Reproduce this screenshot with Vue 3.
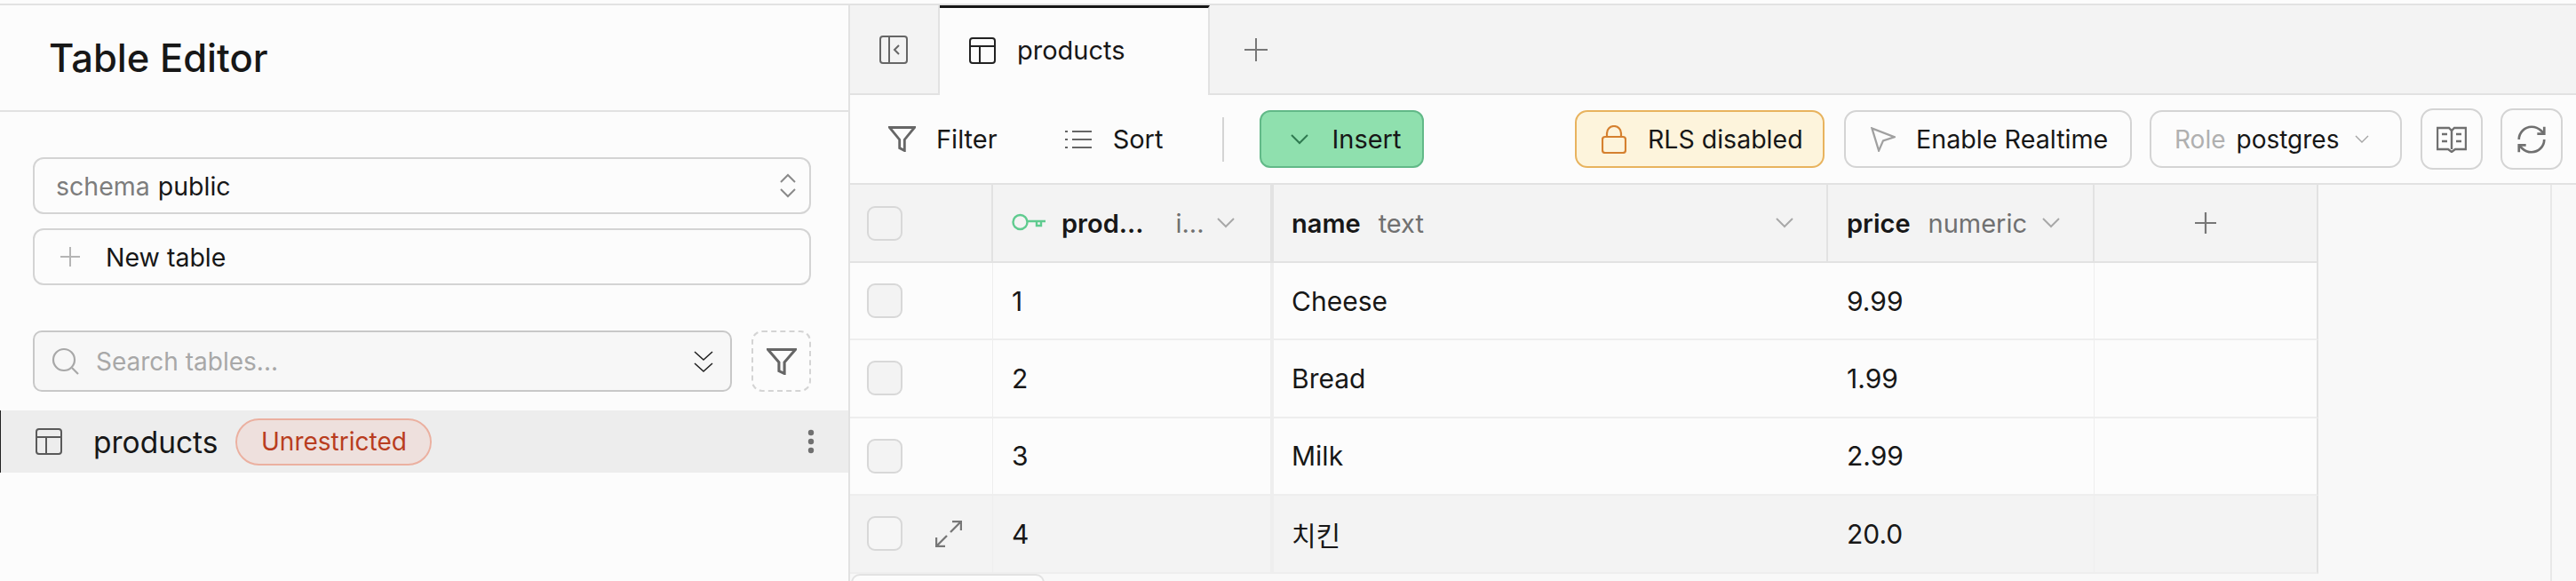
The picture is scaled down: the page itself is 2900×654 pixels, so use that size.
<template>
  <div class="page">
    <div class="top-line"></div>
    <div class="body">
      <aside class="sidebar">
        <div class="side-head"><h1>Table Editor</h1></div>
        <div class="side-form">
          <div class="field schema">
            <span class="muted">schema</span><span class="val">public</span>
            <svg class="updown" width="20" height="30" viewBox="0 0 20 30" fill="none" stroke="#8a8a8a" stroke-width="2"><path d="M2 11 10 3l8 8M2 19l8 8 8-8" /></svg>
          </div>
          <div class="field newtable">
            <svg width="24" height="24" viewBox="0 0 24 24" fill="none" stroke="#b5b5b5" stroke-width="2"><path d="M12 1v22M1 12h22" /></svg>
            <span>New table</span>
          </div>
          <div class="search-row">
            <div class="search">
              <svg width="32" height="32" viewBox="0 0 32 32" fill="none" stroke="#a8a8a8" stroke-width="2.2"><circle cx="14" cy="14" r="12" /><path d="m23 23 7 7" /></svg>
              <span class="placeholder">Search tables...</span>
              <svg class="dbl" width="24" height="26" viewBox="0 0 24 26" fill="none" stroke="#222" stroke-width="1.6"><path d="m2 2 10 9 10-9M2 15l10 9 10-9" /></svg>
            </div>
            <div class="dash-btn">
              <svg width="34" height="30" viewBox="1 2 22 20" preserveAspectRatio="none" fill="none" stroke="#666" stroke-width="2"><polygon points="22 3 2 3 10 12.46 10 19 14 21 14 12.46 22 3" /></svg>
            </div>
          </div>
        </div>
        <div class="table-row">
          <svg class="tbl" width="30" height="30" viewBox="0 0 30 30" fill="none" stroke="#5a5a5a" stroke-width="2"><rect x="1" y="1" width="28" height="28" rx="3" /><path d="M1 10h28M12 10v19" /></svg>
          <span class="row-name">products</span>
          <span class="badge">Unrestricted</span>
          <svg class="dots" width="8" height="28" viewBox="0 0 8 28" fill="#707070"><circle cx="4" cy="4" r="3.2" /><circle cx="4" cy="14" r="3.2" /><circle cx="4" cy="24" r="3.2" /></svg>
        </div>
      </aside>

      <main class="main">
        <div class="tabs">
          <div class="tab-toggle">
            <svg width="32" height="32" viewBox="0 0 32 32" fill="none" stroke="#666" stroke-width="2"><rect x="1" y="1" width="30" height="30" rx="3" /><path d="M11 1v30M22 11l-5 5 5 5" /></svg>
          </div>
          <div class="tab-active">
            <svg width="30" height="30" viewBox="0 0 30 30" fill="none" stroke="#222" stroke-width="2"><rect x="1" y="1" width="28" height="28" rx="3" /><path d="M1 10h28M12 10v19" /></svg>
            <span>products</span>
          </div>
          <div class="tab-add">
            <svg width="26" height="26" viewBox="0 0 26 26" fill="none" stroke="#777" stroke-width="2"><path d="M13 0v26M0 13h26" /></svg>
          </div>
        </div>

        <div class="toolbar">
          <div class="tool-left">
            <div class="tool filter">
              <svg width="31" height="29" viewBox="1 2 22 20" preserveAspectRatio="none" fill="none" stroke="#666" stroke-width="2"><polygon points="22 3 2 3 10 12.46 10 19 14 21 14 12.46 22 3" /></svg>
              <span>Filter</span>
            </div>
            <div class="tool sort">
              <svg width="30" height="22" viewBox="0 0 30 22" fill="none" stroke="#666" stroke-width="2.2"><path d="M8 2h22M8 11h22M8 20h22" /><path d="M0 2h3M0 11h3M0 20h3" /></svg>
              <span>Sort</span>
            </div>
            <div class="tool-sep"></div>
            <div class="insert">
              <svg width="20" height="12" viewBox="0 0 20 12" fill="none" stroke="#2f7a50" stroke-width="2"><path d="m1 1 9 9 9-9" /></svg>
              <span>Insert</span>
            </div>
          </div>
          <div class="tool-right">
            <div class="pill rls">
              <svg width="28" height="32" viewBox="0 0 28 32" fill="none" stroke="#d5802f" stroke-width="2.2"><rect x="1" y="13" width="26" height="18" rx="3" /><path d="M6 13V9a8 8 0 0 1 16 0v4" /></svg>
              <span>RLS disabled</span>
            </div>
            <div class="pill realtime">
              <svg width="28" height="28" viewBox="2 2 20 20" preserveAspectRatio="none" fill="none" stroke="#a0a0a0" stroke-width="1.6"><path d="m3 3 5.5 18 3.5-8 9-3z" /></svg>
              <span>Enable Realtime</span>
            </div>
            <div class="pill role">
              <span class="role-k">Role</span><span class="role-v">postgres</span>
              <svg width="16" height="10" viewBox="0 0 16 10" fill="none" stroke="#a5a5a5" stroke-width="1.4"><path d="m1 1 7 7 7-7" /></svg>
            </div>
            <div class="square first">
              <svg width="34" height="30" viewBox="0 0 34 30" fill="none" stroke="#707070" stroke-width="2.4"><path d="M1 2h13l3 3 3-3h13v24H21l-4 3-4-3H1z" /><path d="M17 5v21M6 9h6M6 17h6M22 9h6M22 17h6" /></svg>
            </div>
            <div class="square">
              <svg width="38" height="38" viewBox="0 0 24 24" fill="none" stroke="#707070" stroke-width="1.7"><path d="M3 12a9 9 0 0 1 9-9 9.75 9.75 0 0 1 6.74 2.74L21 8" /><path d="M21 3v5h-5" /><path d="M21 12a9 9 0 0 1-9 9 9.75 9.75 0 0 1-6.74-2.74L3 16" /><path d="M8 16H3v5" /></svg>
            </div>
          </div>
        </div>

        <div class="grid-area">
          <div class="grid-wrap">
            <div class="grid">
              <div class="cell head c-check"><span class="check"></span></div>
              <div class="cell head c-id">
                <svg class="key" width="38" height="20" viewBox="0 0 38 20" fill="none" stroke="#5fcb8f" stroke-width="2.4"><circle cx="9.5" cy="10" r="8" /><path d="M17.5 9H38M28 9v5h5V9" /></svg>
                <b class="col-id">prod...</b><span class="type col-i">i...</span>
                <svg class="chev" width="20" height="12" viewBox="0 0 20 12" fill="none" stroke="#a8a8a8" stroke-width="2"><path d="m1 1 9 9 9-9" /></svg>
              </div>
              <div class="cell head c-name">
                <b>name</b><span class="type">text</span>
                <svg class="chev" width="20" height="12" viewBox="0 0 20 12" fill="none" stroke="#a8a8a8" stroke-width="2"><path d="m1 1 9 9 9-9" /></svg>
              </div>
              <div class="cell head c-price">
                <b>price</b><span class="type">numeric</span>
                <svg class="chev" width="20" height="12" viewBox="0 0 20 12" fill="none" stroke="#a8a8a8" stroke-width="2"><path d="m1 1 9 9 9-9" /></svg>
              </div>
              <div class="cell head c-add">
                <svg width="24" height="24" viewBox="0 0 24 24" fill="none" stroke="#777" stroke-width="2.2"><path d="M12 0v24M0 12h24" /></svg>
              </div>

              <template v-for="(row, i) in rows" :key="row.id">
                <div class="cell c-check" :class="{ hover: i === 3 }">
                  <span class="check"></span>
                  <svg v-if="i === 3" class="expand" width="30" height="30" viewBox="0 0 30 30" fill="none" stroke="#777" stroke-width="2.4"><path d="M17 13 29 1M19 1h10v10M13 17 1 29M1 19v10h10" /></svg>
                </div>
                <div class="cell c-id" :class="{ hover: i === 3 }">{{ row.id }}</div>
                <div class="cell c-name" :class="{ hover: i === 3 }">{{ row.name }}</div>
                <div class="cell c-price" :class="{ hover: i === 3 }">{{ row.price }}</div>
                <div class="cell c-add" :class="{ hover: i === 3 }"></div>
              </template>
            </div>
            <div class="foot-tab"></div>
          </div>
          <div class="scroll-track"></div>
        </div>
      </main>
    </div>
  </div>
</template>

<script setup>
const rows = [
  { id: 1, name: 'Cheese', price: '9.99' },
  { id: 2, name: 'Bread', price: '1.99' },
  { id: 3, name: 'Milk', price: '2.99' },
  { id: 4, name: '치킨', price: '20.0' },
]
</script>

<style>
html, body {
  margin: 0;
  background: #fcfcfc;
}
</style>

<style scoped>
.page {
  width: 2900px;
  height: 654px;
  overflow: hidden;
  background: #fcfcfc;
  color: #171717;
  font-family: Inter, "Noto Sans CJK KR", sans-serif;
  font-size: 29px;
  display: flex;
  flex-direction: column;
}

.top-line {
  height: 4px;
  flex: none;
  border-bottom: 2px solid #e2e2e2;
}

.body {
  flex: 1;
  display: flex;
  min-height: 0;
}

.sidebar {
  width: 955px;
  flex: none;
  border-right: 2px solid #e2e2e2;
}

.side-head {
  height: 118px;
  display: flex;
  align-items: center;
  padding-left: 55px;
  border-bottom: 2px solid #e2e2e2;
}

h1 {
  margin: 0;
  font-size: 43.5px;
  font-weight: 500;
}

.side-form {
  padding: 51px 42px 0 37px;
  display: flex;
  flex-direction: column;
  gap: 16px;
  font-size: 28.5px;
}

.field {
  box-sizing: border-box;
  height: 64px;
  border: 2px solid #d4d4d4;
  border-radius: 12px;
  display: flex;
  align-items: center;
  padding: 0 14px 0 24px;
}

.muted {
  color: #7d7d7d;
  margin-right: 9px;
}

.updown {
  margin-left: auto;
}

.newtable svg {
  margin-left: 4px;
  margin-right: 28px;
}

.search-row {
  display: flex;
  gap: 22px;
  margin-top: 35px;
}

.search {
  box-sizing: border-box;
  width: 787px;
  height: 69px;
  background: #f7f7f7;
  border: 2px solid #c8c8c8;
  border-radius: 10px;
  display: flex;
  align-items: center;
  padding: 0 18px 0 19px;
  font-size: 28px;
}

.placeholder {
  color: #a8a8a8;
  margin-left: 18px;
}

.dbl {
  margin-left: auto;
}

.dash-btn {
  box-sizing: border-box;
  width: 67px;
  height: 69px;
  border: 2px dashed #d4d4d4;
  border-radius: 12px;
  display: flex;
  align-items: center;
  justify-content: center;
}

.table-row {
  height: 70px;
  margin-top: 21px;
  background: #ededed;
  border-left: 1px solid #222;
  display: flex;
  align-items: center;
  padding-left: 39px;
  padding-right: 38px;
}

.row-name {
  margin-left: 35px;
  font-size: 33.5px;
  padding-top: 2px;
}

.badge {
  box-sizing: border-box;
  height: 53px;
  width: 221px;
  margin-left: 20px;
  background: #eee0dd;
  border: 2px solid #ebb0a0;
  border-radius: 27px;
  color: #b93d20;
  display: flex;
  align-items: center;
  justify-content: center;
  font-size: 28px;
}

.dots {
  margin-left: auto;
}

.main {
  flex: 1;
  min-width: 0;
  display: flex;
  flex-direction: column;
}

.tabs {
  height: 101px;
  flex: none;
  box-sizing: border-box;
  background: #f3f3f3;
  border-bottom: 2px solid #e2e2e2;
  display: flex;
}

.tab-toggle {
  width: 101px;
  padding-left: 33px;
  box-sizing: border-box;
  display: flex;
  align-items: center;
  border-right: 2px solid #e2e2e2;
}

.tab-active {
  box-sizing: border-box;
  width: 304px;
  height: 101px;
  background: #fcfcfc;
  border-top: 3px solid #171717;
  border-right: 2px solid #e2e2e2;
  display: flex;
  align-items: center;
  gap: 24px;
  padding-left: 33px;
  padding-bottom: 3px;
}

.tab-add {
  width: 104px;
  display: flex;
  align-items: center;
  justify-content: center;
}

.toolbar {
  height: 101px;
  flex: none;
  box-sizing: border-box;
  border-bottom: 2px solid #e2e2e2;
  display: flex;
  align-items: center;
  justify-content: space-between;
  padding: 0 15px 0 43px;
}

.tool-left,
.tool-right {
  display: flex;
  align-items: center;
}

.tool {
  display: flex;
  align-items: center;
}

.filter {
  gap: 23px;
}

.sort {
  margin-left: 76px;
  gap: 24px;
}

.tool-sep {
  width: 2px;
  height: 50px;
  background: #d4d4d4;
  margin: 0 40px 0 67px;
}

.insert {
  box-sizing: border-box;
  width: 185px;
  height: 65px;
  background: #8fe0ae;
  border: 2px solid #62b988;
  border-radius: 12px;
  display: flex;
  align-items: center;
  gap: 26px;
  padding-left: 33px;
}

.pill {
  box-sizing: border-box;
  height: 65px;
  border-radius: 14px;
  border: 2px solid #d4d4d4;
  display: flex;
  align-items: center;
}

.rls {
  width: 281px;
  background: #fdf4dc;
  border-color: #e8b35e;
  gap: 24px;
  padding-left: 28px;
  font-size: 28.5px;
}

.realtime {
  width: 324px;
  margin-left: 22px;
  gap: 23px;
  padding-left: 28px;
  font-size: 28.7px;
}

.role {
  width: 284px;
  margin-left: 20px;
  padding-left: 26px;
  font-size: 28px;
}

.role-k {
  color: #b0b0b0;
  margin-right: 12px;
}

.role svg {
  margin-left: 18px;
}

.square {
  box-sizing: border-box;
  width: 70px;
  height: 69px;
  margin-left: 20px;
  border: 2px solid #d4d4d4;
  border-radius: 14px;
  display: flex;
  align-items: center;
  justify-content: center;
}

.square.first {
  margin-left: 21px;
}

.grid-area {
  flex: 1;
  min-height: 0;
  display: flex;
  background: #f8f8f8;
}

.grid-wrap {
  flex: 1;
  min-width: 0;
}

.scroll-track {
  width: 27px;
  flex: none;
  border-left: 2px solid #e8e8e8;
}

.grid {
  display: grid;
  grid-template-columns: 161px 316px 624px 300px 252px;
  grid-template-rows: 88px repeat(3, 87.3px) 88px;
  width: 1653px;
  background: #fcfcfc;
  font-size: 30px;
}

.cell {
  box-sizing: border-box;
  display: flex;
  align-items: center;
  border-right: 1px solid #eeeeee;
  border-bottom: 2px solid #eeeeee;
  padding-left: 21px;
  white-space: nowrap;
}

.cell.hover {
  background: #f3f3f3;
}

.head {
  background: #f3f3f3;
  border-right: 2px solid #e2e2e2;
  border-bottom: 2px solid #e2e2e2;
}

.c-check {
  padding-left: 19px;
}

.c-name {
  border-right: 0;
  padding-left: 20px;
}

.c-id {
  border-right: 4px solid #eeeeee;
}

.c-id.head {
  border-right: 4px solid #e2e2e2;
}

.c-name.head {
  border-right: 2px solid #e2e2e2;
}

.c-add {
  border-right: 2px solid #e2e2e2;
}

.c-add.head {
  justify-content: center;
  padding-left: 0;
}

.check {
  box-sizing: border-box;
  width: 40px;
  height: 39px;
  background: #f3f3f3;
  border: 2px solid #d8d8d8;
  border-radius: 9px;
}

.hover .check {
  background: #f6f6f6;
}

.expand {
  margin-left: 37px;
}

b {
  font-weight: 600;
  font-size: 29px;
}

.type {
  color: #707070;
  font-size: 29px;
  margin-left: 20px;
}

.key {
  margin-right: 18px;
  margin-bottom: 3px;
}

.col-i {
  margin-left: 36px;
}

.chev {
  margin-left: auto;
  margin-right: 37px;
}

.c-id .chev {
  margin-right: 40px;
}

.foot-tab {
  box-sizing: border-box;
  width: 218px;
  height: 10px;
  margin-left: 1px;
  background: #fcfcfc;
  border: 2px solid #e2e2e2;
  border-bottom: 0;
  border-radius: 14px 14px 0 0;
}
</style>
